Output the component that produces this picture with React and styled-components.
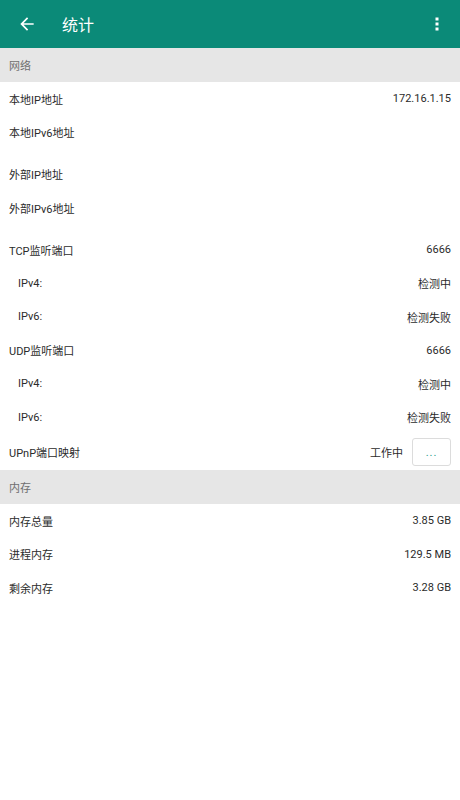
import React from 'react';
import styled, { createGlobalStyle } from 'styled-components';

const GlobalStyle = createGlobalStyle`
  html, body {
    margin: 0;
    padding: 0;
    background: #fff;
    font-family: Roboto, "Noto Sans CJK SC", sans-serif;
  }
`;

const Page = styled.div`
  width: 460px;
  min-height: 800px;
  background: #fff;
`;

const Toolbar = styled.div`
  height: 48px;
  background: #0b8a78;
  display: flex;
  align-items: center;
  color: #fff;
`;

const IconButton = styled.div`
  width: ${props => props.width || 54}px;
  height: 48px;
  display: flex;
  align-items: center;
  justify-content: center;
`;

const Title = styled.div`
  flex: 1;
  font-size: 16px;
  font-weight: 400;
  padding-left: 8px;
`;

const SectionHeader = styled.div`
  height: 34px;
  background: #e6e6e6;
  display: flex;
  align-items: center;
  padding-left: 9px;
  font-size: 11px;
  color: #6f6f6f;
`;

const Group = styled.div`
  margin-bottom: ${props => props.gap || 0}px;
`;

const Row = styled.div`
  height: ${props => props.h || 33.5}px;
  display: flex;
  align-items: center;
  justify-content: space-between;
  padding: 0 9px 0 ${props => (props.indent ? 18 : 9)}px;
  font-size: 11px;
  color: #2b2b2b;
`;

const Value = styled.div`
  display: flex;
  align-items: center;
  gap: 9px;
`;

const MoreButton = styled.div`
  width: 37px;
  height: 26px;
  border: 1px solid #dcdcdc;
  border-radius: 3px;
  display: flex;
  align-items: center;
  justify-content: center;
  color: #2a9a8a;
  font-size: 11px;
  letter-spacing: 1px;
`;

const networkGroups = [
  [
    { label: '本地IP地址', value: '172.16.1.15' },
    { label: '本地IPv6地址', value: '' },
  ],
  [
    { label: '外部IP地址', value: '' },
    { label: '外部IPv6地址', value: '' },
  ],
  [
    { label: 'TCP监听端口', value: '6666' },
    { label: 'IPv4:', value: '检测中', indent: true },
    { label: 'IPv6:', value: '检测失败', indent: true },
    { label: 'UDP监听端口', value: '6666' },
    { label: 'IPv4:', value: '检测中', indent: true },
    { label: 'IPv6:', value: '检测失败', indent: true },
  ],
];

const memoryRows = [
  { label: '内存总量', value: '3.85 GB' },
  { label: '进程内存', value: '129.5 MB' },
  { label: '剩余内存', value: '3.28 GB' },
];

const App = () => (
  <>
    <GlobalStyle />
    <Page>
      <Toolbar>
        <IconButton>
          <svg width="20" height="20" viewBox="0 0 24 24" fill="#fff">
            <path d="M20 11H7.83l5.59-5.59L12 4l-8 8 8 8 1.41-1.41L7.83 13H20v-2z" />
          </svg>
        </IconButton>
        <Title>统计</Title>
        <IconButton width={46}>
          <svg width="4" height="14" viewBox="0 0 4 14" fill="#fff">
            <rect x="0.5" y="0.5" width="3" height="3" />
            <rect x="0.5" y="5.5" width="3" height="3" />
            <rect x="0.5" y="10.5" width="3" height="3" />
          </svg>
        </IconButton>
      </Toolbar>

      <SectionHeader>网络</SectionHeader>
      {networkGroups.map((group, i) => (
        <Group key={i} gap={i < 2 ? 8.5 : 0}>
          {group.map((row, j) => (
            <Row key={j} indent={row.indent}>
              <span>{row.label}</span>
              <span>{row.value}</span>
            </Row>
          ))}
        </Group>
      ))}
      <Row h={36}>
        <span>UPnP端口映射</span>
        <Value>
          <span>工作中</span>
          <MoreButton>...</MoreButton>
        </Value>
      </Row>

      <SectionHeader>内存</SectionHeader>
      {memoryRows.map((row, j) => (
        <Row key={j}>
          <span>{row.label}</span>
          <span>{row.value}</span>
        </Row>
      ))}
    </Page>
  </>
);

export default App;
